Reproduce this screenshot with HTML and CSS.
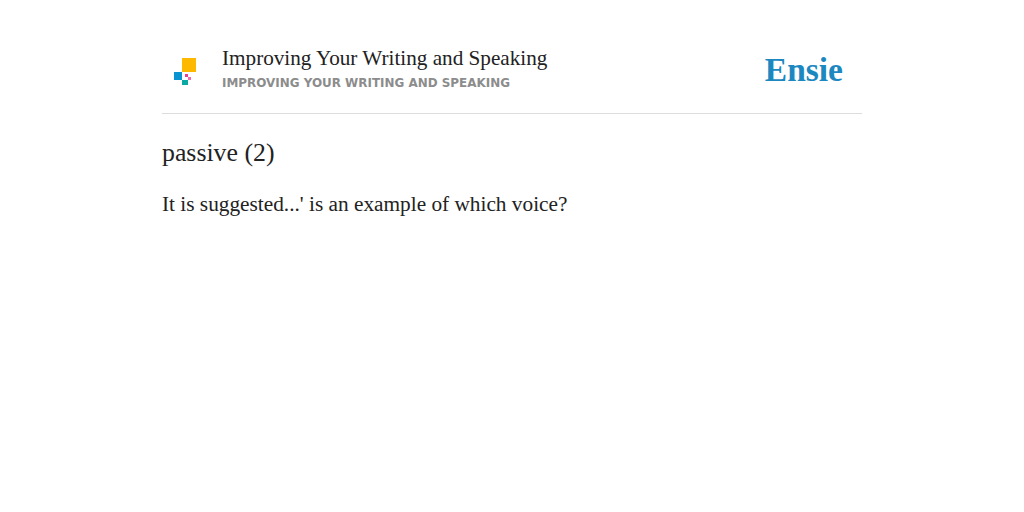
FILE: index.html
```html
<!DOCTYPE html>
<html lang="en">
<head>
  <meta charset="UTF-8">
  <title>passive (2)</title>
  <link rel="stylesheet" href="styles.css">
</head>
<body>

  <div class="page">
    <div class="header">
      <svg class="logo" width="24" height="28" viewBox="0 0 24 28">
        <rect x="9" y="0" width="14" height="14" fill="#fdb900"/>
        <rect x="1" y="14" width="8" height="8" fill="#0a93d1"/>
        <rect x="9" y="22" width="6" height="5" fill="#0aa9a5"/>
        <rect x="12" y="16" width="3" height="3" fill="#ec3c93"/>
        <rect x="15" y="19" width="3" height="3" fill="#f26bae"/>
      </svg>
      <div class="titles">
        <div class="title">Improving Your Writing and Speaking</div>
        <div class="subtitle">IMPROVING YOUR WRITING AND SPEAKING</div>
      </div>
      <div class="brand">Ensie</div>
    </div>

    <h1>passive (2)</h1>
    <p>It is suggested...' is an example of which voice?</p>
  </div>

</body>
</html>
```

FILE: styles.css
```css
body {
  margin: 0;
  background-color: #fff;
  color: #222;
  font-family: "Liberation Serif", serif;
}
.page {
  width: 700px;
  margin: 0 auto;
}
.header {
  display: flex;
  align-items: center;
  box-sizing: border-box;
  height: 114px;
  padding-top: 26px;
  border-bottom: 1px solid #ddd;
}
.logo {
  margin: 4px 25px 0 11px;
}
.titles {
  flex: 1;
}
.title {
  font-size: 21.2px;
  line-height: 27px;
}
.subtitle {
  font-family: "DejaVu Sans", sans-serif;
  font-size: 11.95px;
  font-weight: bold;
  line-height: 22px;
  color: #8c8c8c;
}
.brand {
  font-size: 33.5px;
  font-weight: bold;
  color: #1d88bf;
  margin-right: 19px;
}
h1 {
  font-size: 25.8px;
  font-weight: normal;
  line-height: 32px;
  margin: 23px 0 0;
}
p {
  font-size: 21.3px;
  line-height: 28px;
  margin: 21px 0 0;
}
```
